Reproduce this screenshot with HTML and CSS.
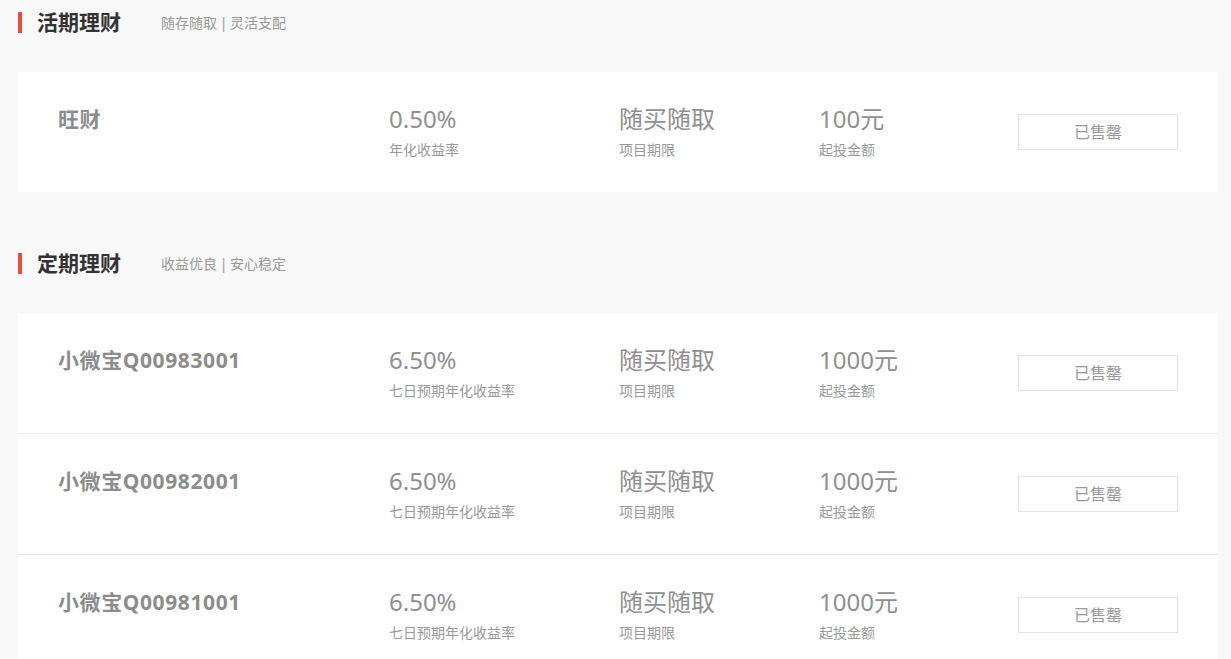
FILE: index.html
```html
<!DOCTYPE html>
<html>
<head>
    <meta charset="utf-8">
    <title>理财产品</title>
    <link rel="stylesheet" href="styles.css">
</head>
<body>
    <div class="page">
        <div class="section">
            <div class="section-head">
                <span class="mark"></span>
                <h2>活期理财</h2>
                <span class="sub">随存随取 | 灵活支配</span>
            </div>
            <div class="list">
                <div class="item">
                    <div class="name">旺财</div>
                    <div class="col">
                        <div class="val">0.50%</div>
                        <div class="lbl">年化收益率</div>
                    </div>
                    <div class="col">
                        <div class="val">随买随取</div>
                        <div class="lbl">项目期限</div>
                    </div>
                    <div class="col">
                        <div class="val">100元</div>
                        <div class="lbl">起投金额</div>
                    </div>
                    <div class="btn">已售罄</div>
                </div>
            </div>
        </div>

        <div class="section">
            <div class="section-head">
                <span class="mark"></span>
                <h2>定期理财</h2>
                <span class="sub">收益优良 | 安心稳定</span>
            </div>
            <div class="list">
                <div class="item">
                    <div class="name">小微宝Q00983001</div>
                    <div class="col">
                        <div class="val">6.50%</div>
                        <div class="lbl">七日预期年化收益率</div>
                    </div>
                    <div class="col">
                        <div class="val">随买随取</div>
                        <div class="lbl">项目期限</div>
                    </div>
                    <div class="col">
                        <div class="val">1000元</div>
                        <div class="lbl">起投金额</div>
                    </div>
                    <div class="btn">已售罄</div>
                </div>
                <div class="item">
                    <div class="name">小微宝Q00982001</div>
                    <div class="col">
                        <div class="val">6.50%</div>
                        <div class="lbl">七日预期年化收益率</div>
                    </div>
                    <div class="col">
                        <div class="val">随买随取</div>
                        <div class="lbl">项目期限</div>
                    </div>
                    <div class="col">
                        <div class="val">1000元</div>
                        <div class="lbl">起投金额</div>
                    </div>
                    <div class="btn">已售罄</div>
                </div>
                <div class="item">
                    <div class="name">小微宝Q00981001</div>
                    <div class="col">
                        <div class="val">6.50%</div>
                        <div class="lbl">七日预期年化收益率</div>
                    </div>
                    <div class="col">
                        <div class="val">随买随取</div>
                        <div class="lbl">项目期限</div>
                    </div>
                    <div class="col">
                        <div class="val">1000元</div>
                        <div class="lbl">起投金额</div>
                    </div>
                    <div class="btn">已售罄</div>
                </div>
            </div>
        </div>
    </div>
</body>
</html>
```

FILE: styles.css
```css
body {
    margin: 0;
    background: #f8f8f8;
    font-family: "Noto Sans", "Noto Sans CJK SC", sans-serif;
    color: #333;
}
.page {
    width: 1200px;
    padding-left: 18px;
}
.section + .section {
    margin-top: 49px;
}
.section-head {
    display: flex;
    align-items: center;
    height: 44px;
    margin-bottom: 28px;
}
.mark {
    width: 4px;
    height: 21px;
    background: #f04a40;
}
.section-head h2 {
    margin: 0 0 0 15px;
    font-size: 21px;
    font-weight: bold;
    color: #333;
    line-height: 44px;
}
.sub {
    margin-left: 40px;
    font-size: 14px;
    word-spacing: -1px;
    color: #999;
}
.list {
    background: #fff;
}
.item {
    display: grid;
    grid-template-columns: 331px 230px 200px 1fr 160px;
    height: 88px;
    padding: 32px 40px 0;
    border-bottom: 1px solid #e6e6e6;
}
.item:last-child {
    border-bottom: none;
}
.name {
    font-size: 21px;
    font-weight: bold;
    line-height: 30px;
    letter-spacing: 0.6px;
    color: #8c8c8c;
}
.val {
    font-size: 24px;
    line-height: 30px;
    color: #8f8f8f;
}
.lbl {
    margin-top: 6px;
    font-size: 14px;
    line-height: 20px;
    color: #999;
}
.btn {
    margin-top: 10px;
    height: 36px;
    box-sizing: border-box;
    border: 1px solid #e3e3e3;
    text-align: center;
    line-height: 34px;
    font-size: 16px;
    color: #999;
}
```
